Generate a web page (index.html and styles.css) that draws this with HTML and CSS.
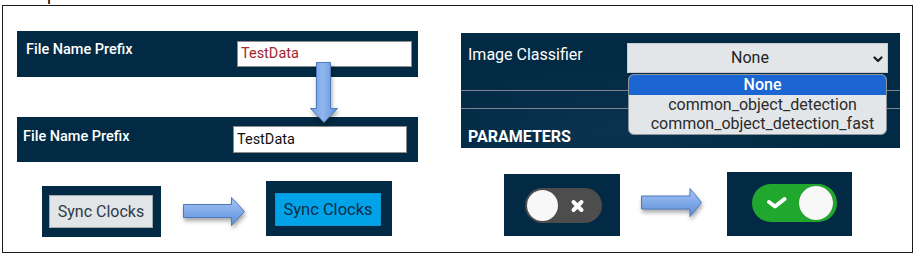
FILE: index.html
```html
<!DOCTYPE html>
<html lang="en">
<head>
    <meta charset="UTF-8">
    <title>Control states</title>
    <link rel="stylesheet" href="styles.css">
</head>
<body>
    <div class="caption"><span>Example</span></div>

    <div class="figure">
        <!-- Left: text field and button -->
        <div class="col-left">
            <div class="panel prefix prefix-before">
                <label>File Name Prefix</label>
                <div class="field">TestData</div>
            </div>

            <svg class="arrow arrow-down" width="28" height="61" viewBox="0 0 28 61">
                <defs>
                    <linearGradient id="gradDown" x1="0" y1="0" x2="1" y2="0">
                        <stop offset="0" stop-color="#6f9be0"/>
                        <stop offset="0.45" stop-color="#92b6ee"/>
                        <stop offset="1" stop-color="#5d8cd6"/>
                    </linearGradient>
                </defs>
                <path d="M6.5 0.5 H20.5 V46.5 H27.5 L14 60.5 L0.5 46.5 H6.5 Z" fill="url(#gradDown)" stroke="#4b7bbf"/>
            </svg>

            <div class="panel prefix prefix-after">
                <label>File Name Prefix</label>
                <div class="field">TestData</div>
            </div>

            <div class="step-row">
                <div class="panel sync-before">
                    <button class="sync">Sync Clocks</button>
                </div>
                <svg class="arrow arrow-right" width="62" height="29" viewBox="0 0 62 29">
                    <defs>
                        <linearGradient id="gradRight" x1="0" y1="0" x2="0" y2="1">
                            <stop offset="0" stop-color="#a9c7f2"/>
                            <stop offset="0.5" stop-color="#80a9e8"/>
                            <stop offset="1" stop-color="#5e8ed6"/>
                        </linearGradient>
                    </defs>
                    <path d="M0.5 7.5 H48.5 V0.5 L61.5 14.5 L48.5 28.5 V20.5 H0.5 Z" fill="url(#gradRight)" stroke="#4b7bbf"/>
                </svg>
                <div class="panel sync-after">
                    <button class="sync">Sync Clocks</button>
                </div>
            </div>
        </div>

        <!-- Right: select and switch -->
        <div class="col-right">
            <div class="panel classifier">
                <div class="classifier-row">
                    <label>Image Classifier</label>
                    <div class="select-wrap">
                        <div class="select">
                            None
                            <svg class="chevron" width="10" height="7" viewBox="0 0 10 7">
                                <path d="M1.5 1.5 L5 5 L8.5 1.5" fill="none" stroke="#1e1e1e" stroke-width="2.2" stroke-linecap="round" stroke-linejoin="round"/>
                            </svg>
                        </div>
                        <ul class="options">
                            <li class="selected">None</li>
                            <li>common_object_detection</li>
                            <li>common_object_detection_fast</li>
                        </ul>
                    </div>
                </div>
                <div class="rule"></div>
                <div class="rule"></div>
                <div class="params">PARAMETERS</div>
            </div>

            <div class="toggle-row">
                <div class="panel toggle-off-box">
                    <div class="switch off">
                        <span class="knob"></span>
                        <svg class="mark" width="15" height="14" viewBox="0 0 15 14">
                            <path d="M3.5 3 L11.5 11 M11.5 3 L3.5 11" stroke="#fff" stroke-width="4" stroke-linecap="round"/>
                        </svg>
                    </div>
                </div>
                <svg class="arrow arrow-right-2" width="61" height="29" viewBox="0 0 61 29">
                    <path d="M0.5 8 H49 V0.5 L60.5 14.5 L49 28.5 V21 H0.5 Z" fill="url(#gradRight)" stroke="#4b7bbf"/>
                </svg>
                <div class="panel toggle-on-box">
                    <div class="switch on">
                        <svg class="mark" width="24" height="17" viewBox="0 0 24 17">
                            <polyline points="5,8 11,12.5 20.5,5" fill="none" stroke="#fff" stroke-width="4" stroke-linecap="round" stroke-linejoin="round"/>
                        </svg>
                        <span class="knob"></span>
                    </div>
                </div>
            </div>
        </div>
    </div>
</body>
</html>
```

FILE: styles.css
```css
/* Base */
* {
    box-sizing: border-box;
}

body {
    margin: 0;
    background: #fff;
    font-family: Roboto, "Liberation Sans", sans-serif;
}

/* Cut-off caption above the figure */
.caption {
    display: flow-root;
    height: 5px;
    overflow: hidden;
    padding-left: 1px;
    font: 18px/18px "Liberation Sans", Arial, sans-serif;
    color: #000;
}

.caption span {
    display: block;
    margin-top: -15px;
}

/* Frame */
.figure {
    display: flex;
    align-items: flex-start;
    width: 911px;
    height: 248px;
    margin-left: 2px;
    border: 1px solid #1a1a1a;
}

.panel {
    background: #022a44;
    color: #fff;
}

.col-left {
    position: relative;
    width: 401px;
    margin-left: 14px;
    padding-top: 25px;
}

.col-right {
    width: 439px;
    margin-left: 43px;
    padding-top: 27px;
}

/* File name prefix */
.prefix {
    display: flex;
    justify-content: space-between;
    align-items: flex-start;
}

.prefix label {
    font-size: 14.5px;
    font-weight: 500;
    line-height: 17px;
}

.field {
    background: #fff;
    border: 1px solid #8c8c8c;
    padding-left: 3px;
    font-size: 14.5px;
}

.prefix-before {
    height: 46px;
    padding: 0 6px 0 9px;
}

.prefix-before label {
    margin-top: 10px;
}

.prefix-before .field {
    width: 175px;
    height: 26px;
    margin-top: 10px;
    line-height: 23px;
    color: #a3262a;
}

.prefix-after {
    height: 45px;
    margin-top: 40px;
    padding: 0 11px 0 6px;
}

.prefix-after label {
    margin-top: 11px;
}

.prefix-after .field {
    width: 174px;
    height: 27px;
    margin-top: 9px;
    line-height: 25px;
    color: #111;
}

/* Arrows */
.arrow {
    display: block;
    flex: none;
    overflow: visible;
    filter: drop-shadow(1px 3px 2px rgba(0, 0, 0, 0.35));
}

.arrow-down {
    position: absolute;
    left: 293px;
    top: 56px;
    z-index: 2;
}

.arrow-right {
    margin: 16px 0 0 22px;
}

.arrow-right-2 {
    margin: 16px 0 0 21px;
}

/* Sync clocks */
.step-row {
    display: flex;
    align-items: flex-start;
    margin-top: 19px;
}

.sync-before {
    width: 119px;
    height: 51px;
    margin: 5px 0 0 25px;
    padding: 9px 0 0 7px;
}

.sync-after {
    width: 126px;
    height: 55px;
    margin-left: 21px;
    padding: 12px 0 0 9px;
}

.sync {
    display: block;
    height: 33px;
    padding: 0;
    border: 1px solid;
    font-family: Roboto, "Liberation Sans", sans-serif;
    font-size: 16px;
    line-height: 31px;
    text-align: center;
}

.sync-before .sync {
    width: 104px;
    background: #e1e5e8;
    border-color: #a2a9af;
    color: #2e3a47;
}

.sync-after .sync {
    width: 106px;
    background: #00a2e8;
    border-color: #0896d6;
    color: #0d2c45;
    font-size: 16.5px;
}

/* Image classifier */
.classifier {
    height: 115px;
    background: radial-gradient(ellipse 70% 90% at 35% 85%, #0b3350 0%, #022a44 70%);
}

.classifier-row {
    display: flex;
    justify-content: space-between;
    align-items: flex-start;
    padding: 10px 12px 0 7px;
}

.classifier-row label {
    margin-top: 2px;
    font-size: 16px;
    line-height: 20px;
}

.select-wrap {
    position: relative;
    width: 261px;
}

.select {
    position: relative;
    height: 30px;
    padding-right: 15px;
    background: #e3e6e9;
    border: 1px solid #c9cdd1;
    color: #222;
    font-size: 16px;
    line-height: 28px;
    text-align: center;
}

.chevron {
    position: absolute;
    right: 4px;
    top: 12px;
}

.options {
    position: absolute;
    left: 1px;
    top: 31px;
    width: 259px;
    margin: 0;
    padding: 0;
    list-style: none;
    background: #e3e6e9;
    border: 1px solid #8e959c;
    border-radius: 6px;
    overflow: hidden;
    z-index: 2;
}

.options li {
    height: 19.5px;
    padding-left: 10px;
    color: #2b2b2b;
    font-size: 16px;
    line-height: 19.5px;
    text-align: center;
}

.options li.selected {
    background: #1b66d3;
    color: #fff;
    font-weight: 500;
}

.rule {
    height: 1px;
    margin-top: 17px;
    background: #7d8690;
}

.params {
    margin: 18px 0 0 7px;
    font-size: 16px;
    font-weight: 700;
    line-height: 19px;
}

/* Switches */
.toggle-row {
    display: flex;
    align-items: flex-start;
    margin-top: 24px;
}

.toggle-off-box {
    width: 116px;
    height: 62px;
    margin: 2px 0 0 43px;
    padding: 14px 0 0 21px;
}

.toggle-on-box {
    width: 125px;
    height: 64px;
    margin-left: 25px;
    padding: 12px 0 0 25px;
}

.switch {
    position: relative;
    border-radius: 999px;
}

.switch.off {
    width: 77px;
    height: 35px;
    background: #4d4d4d;
}

.switch.on {
    width: 85px;
    height: 38px;
    background: #1fa82d;
}

.knob {
    position: absolute;
    border-radius: 50%;
    background: #f8f8f8;
    box-shadow: 0 0 1px rgba(0, 0, 0, 0.3);
}

.off .knob {
    left: 2px;
    top: 2px;
    width: 31px;
    height: 31px;
}

.on .knob {
    left: 47px;
    top: 2px;
    width: 34px;
    height: 34px;
}

.mark {
    position: absolute;
}

.off .mark {
    left: 45px;
    top: 11px;
}

.on .mark {
    left: 12px;
    top: 10px;
}
```
